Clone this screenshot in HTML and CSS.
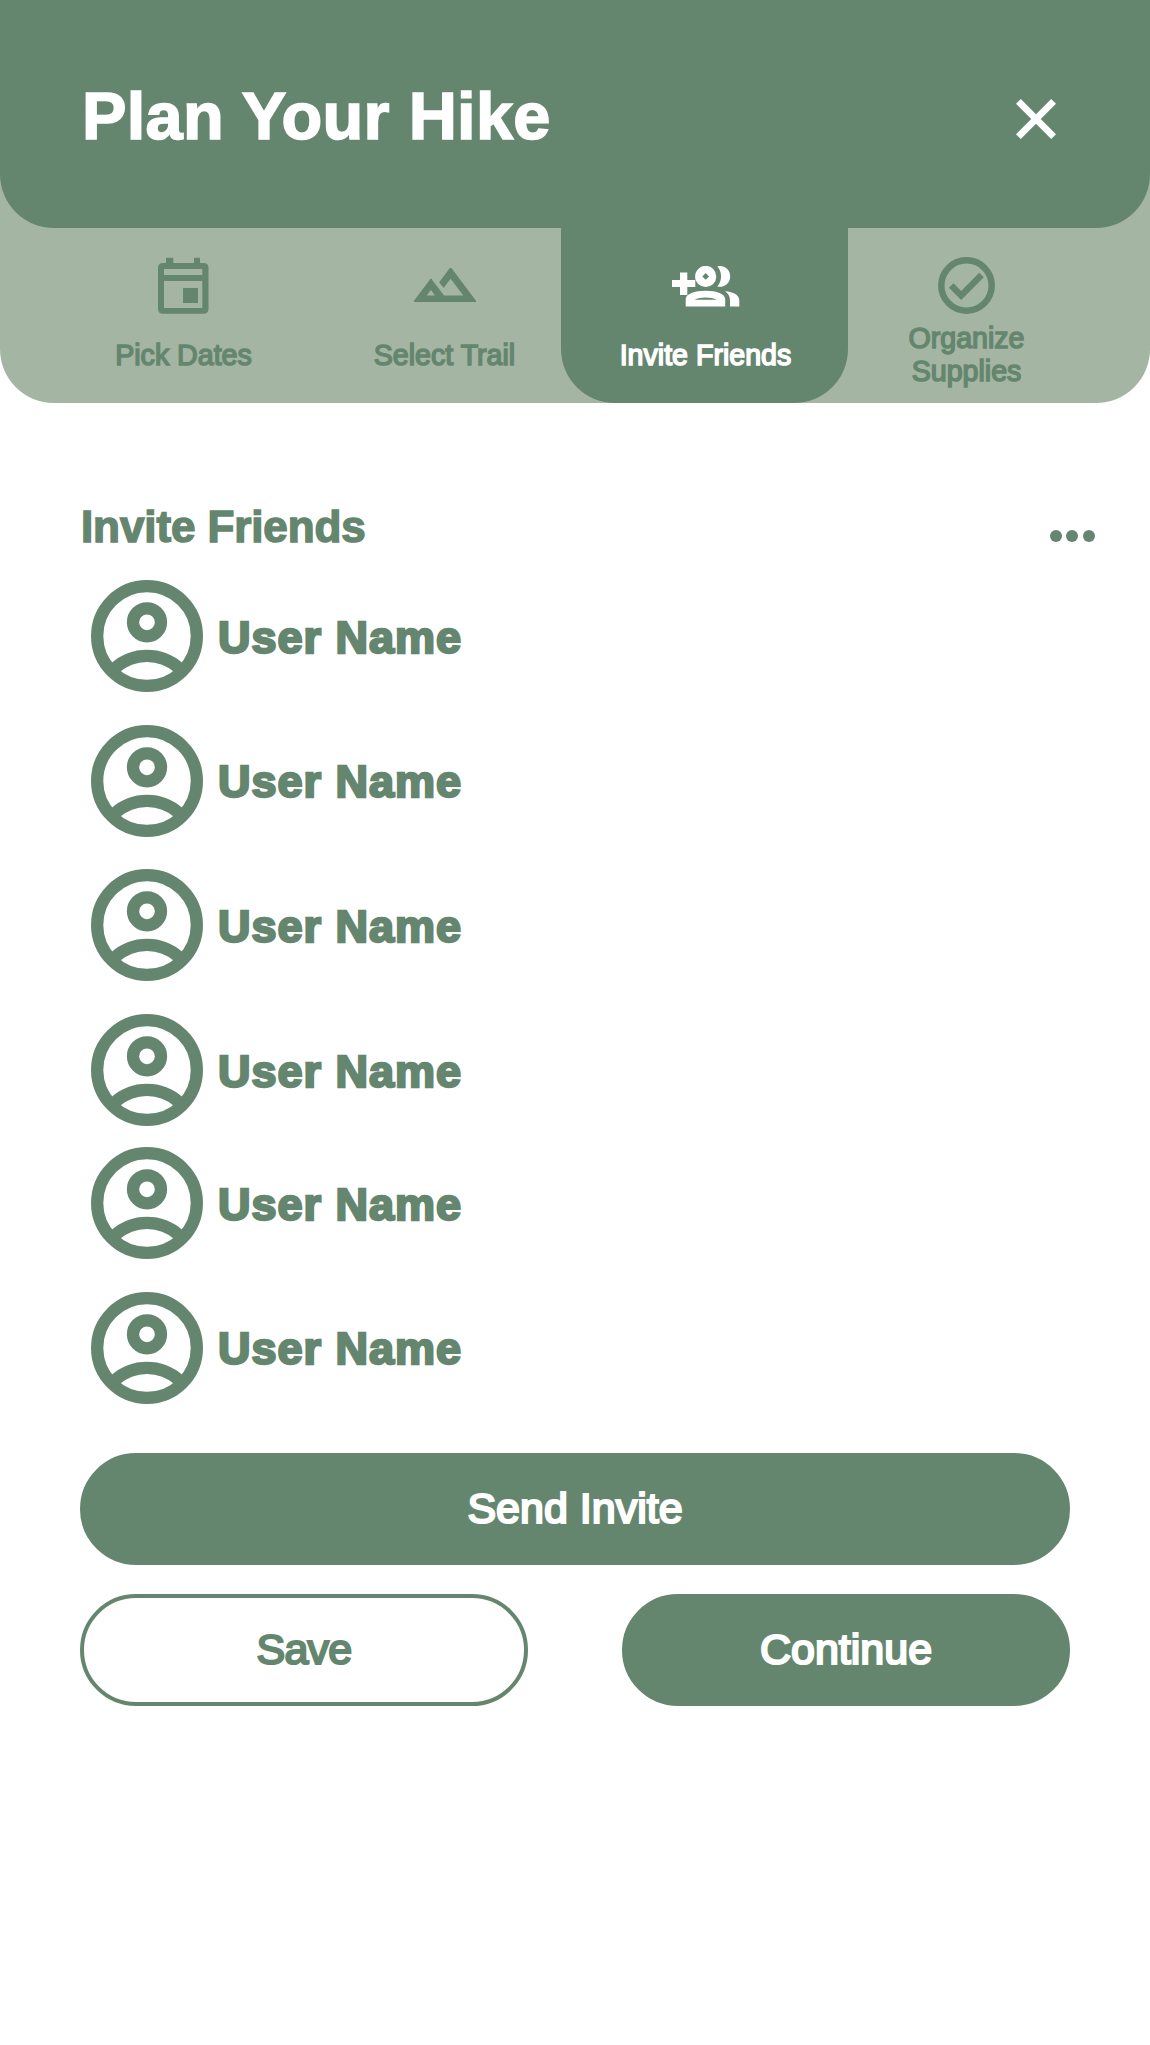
FILE: index.html
```html
<!DOCTYPE html>
<html lang="en">
<head>
  <meta charset="UTF-8">
  <meta name="viewport" content="width=device-width, initial-scale=1.0">
  <title>Plan Your Hike</title>
  <link rel="stylesheet" href="styles.css">
</head>
<body>
  <svg class="defs" width="0" height="0">
    <symbol id="account" viewBox="0 0 112 112">
      <g fill="none" stroke="currentColor" stroke-width="12.300">
        <circle cx="56" cy="56" r="49.850"/>
        <circle cx="56" cy="42.300" r="14"/>
        <path d="M24 88A48 48 0 0 1 88 88"/>
      </g>
    </symbol>
  </svg>

  <header class="header">
    <h1>Plan Your Hike</h1>
    <button class="close" aria-label="Close">
      <svg width="40" height="40" viewBox="0 0 40 40"><path d="M2.400 2.400l35.200 35.200M37.600 2.400L2.400 37.600" stroke="currentColor" stroke-width="6.800"/></svg>
    </button>
  </header>

  <nav class="tabs">
    <a class="tab tab-dates">
      <span class="tab-icon">
        <svg width="51" height="57" viewBox="0 0 51 57" fill="currentColor"><path fill-rule="evenodd" d="M8 .7h7.300V6H36V.7h6V6h3.500q5 0 5 5v40.700q0 5-5 5H5q-5 0-5-5V11q0-5 5-5h3zM6 12v6h38.300v-6zM6 24v27h38.300V24z"/><path d="M25 31h15v15H25z"/></svg>
      </span>
      <span class="tab-label">Pick Dates</span>
    </a>
    <a class="tab tab-trail">
      <span class="tab-icon">
        <svg width="62" height="34" viewBox="40 -720 880 480" fill="currentColor" stroke="currentColor" stroke-width="20"><path d="m40-240 240-320 180 240h300L560-586 460-454l-50-66 150-200 360 480H40Zm160-80h160l-80-107-80 107Z"/></svg>
      </span>
      <span class="tab-label">Select Trail</span>
    </a>
    <a class="tab tab-friends active">
      <span class="tab-icon">
        <svg width="68" height="41" viewBox="0 0 68 41" fill="currentColor">
          <path d="M8 6.500h7.300V14h8v7h-8v8H8v-8H0v-7h8z"/>
          <path fill-rule="evenodd" d="M33.700-.2a10.600 10.600 0 1 1 0 21.200 10.600 10.600 0 0 1 0-21.200zm0 7.200l-3.400 3.400 3.400 3.400 3.400-3.400z"/>
          <path fill-rule="evenodd" d="M13.700 40.500V33c0-5 9-8.200 20-8.200s19.500 3.200 19.500 8.200v7.500zM22.500 33.700h22.200c-6-2.800-16.200-2.800-22.200 0z"/>
          <path d="M45.300.2C53 -1 58.200 4 58.200 10.400S53 21.800 45.300 20.600c5-6 5-14.400 0-20.400z"/>
          <path d="M53 25.300c8.500.5 14.300 4 14.300 9v6.200H58v-6.500c0-3.500-2-6.500-5-8.700z"/>
        </svg>
      </span>
      <span class="tab-label">Invite Friends</span>
    </a>
    <a class="tab tab-supplies">
      <span class="tab-icon">
        <svg width="57" height="57" viewBox="0 0 57 57" fill="none" stroke="currentColor" stroke-width="6.500"><circle cx="28.500" cy="28.500" r="25.200"/><path d="M13.200 28.500L23.200 38.500 43.500 18"/></svg>
      </span>
      <span class="tab-label">Organize<br>Supplies</span>
    </a>
  </nav>

  <main class="content">
    <div class="section-head">
      <h2>Invite Friends</h2>
      <div class="more"><i></i><i></i><i></i></div>
    </div>

    <ul class="friends">
      <li class="friend"><svg class="avatar"><use href="#account"/></svg><span>User Name</span></li>
      <li class="friend"><svg class="avatar"><use href="#account"/></svg><span>User Name</span></li>
      <li class="friend"><svg class="avatar"><use href="#account"/></svg><span>User Name</span></li>
      <li class="friend"><svg class="avatar"><use href="#account"/></svg><span>User Name</span></li>
      <li class="friend"><svg class="avatar"><use href="#account"/></svg><span>User Name</span></li>
      <li class="friend"><svg class="avatar"><use href="#account"/></svg><span>User Name</span></li>
    </ul>

    <div class="actions">
      <button class="btn btn-wide">Send Invite</button>
      <button class="btn btn-outline">Save</button>
      <button class="btn">Continue</button>
    </div>
  </main>
</body>
</html>
```
FILE: styles.css
```css
* {
  box-sizing: border-box;
}

body {
  margin: 0;
  background: #fff;
  color: #65866e;
  font-family: "Liberation Sans", Arial, Helvetica, sans-serif;
}

h1, h2, ul {
  margin: 0;
  padding: 0;
}

button {
  font-family: inherit;
}

.defs {
  display: block;
}

/* header */
.header {
  position: relative;
  z-index: 1;
  display: flex;
  justify-content: space-between;
  align-items: flex-start;
  height: 228px;
  padding: 76px 94px 0 82px;
  background: #65866e;
  color: #fff;
  border-radius: 0 0 54px 54px;
}

.header h1 {
  font-size: 66.7px;
  line-height: 80px;
  letter-spacing: 0.3px;
  -webkit-text-stroke: 1.6px currentColor;
}

.close {
  display: flex;
  margin-top: 23px;
  padding: 0;
  border: 0;
  background: none;
  color: #fff;
}

/* tabs */
.tabs {
  display: flex;
  height: 235px;
  margin-top: -60px;
  padding: 60px 0 0 39px;
  background: #a4b5a4;
  border-radius: 0 0 54px 54px;
}

.tab {
  display: flex;
  flex-direction: column;
  align-items: center;
  padding-top: 28px;
}

.tab-dates { width: 289px; }
.tab-trail { width: 233px; }
.tab-friends { width: 287px; }
.tab-supplies { width: 237px; }

.tab.active {
  background: #65866e;
  color: #fff;
  border-radius: 0 0 54px 54px;
}

.tab-icon {
  display: flex;
  align-items: center;
  height: 58px;
}

.tab.active .tab-icon {
  padding: 2px 0 0 2px;
}

.tab.active .tab-label {
  padding-left: 2px;
}

.tab-label {
  display: flex;
  align-items: center;
  height: 66px;
  margin-top: 8px;
  font-size: 28.6px;
  line-height: 33px;
  text-align: center;
  -webkit-text-stroke: 1.5px currentColor;
}

/* friends list */
.content {
  padding: 99px 80px 0;
}

.section-head {
  display: flex;
  justify-content: space-between;
  margin-right: -25px;
}

.section-head h2 {
  padding-left: 1px;
  font-size: 44px;
  line-height: 50px;
  letter-spacing: -0.1px;
  -webkit-text-stroke: 1.5px currentColor;
}

.more {
  display: flex;
  gap: 4.4px;
  padding-top: 28px;
}

.more i {
  width: 12.2px;
  height: 12.2px;
  border-radius: 50%;
  background: #65866e;
}

.friends {
  display: flex;
  flex-direction: column;
  gap: 32.7px;
  margin-top: 28px;
  padding-left: 11px;
  list-style: none;
}

.friend {
  display: flex;
  align-items: center;
  gap: 15px;
  height: 112px;
  font-size: 45px;
  font-weight: bold;
  letter-spacing: 1px;
  -webkit-text-stroke: 2.4px currentColor;
}

.friend:nth-child(5) {
  margin-top: -11.5px;
}

.friend span {
  padding-top: 3px;
}

.avatar {
  width: 112px;
  height: 112px;
}

/* buttons */
.actions {
  display: grid;
  grid-template-columns: 1fr 1fr;
  gap: 29px 94px;
  margin-top: 49px;
}

.btn {
  height: 112px;
  padding: 0 0 1px;
  border: 4px solid #65866e;
  border-radius: 57px;
  background: #65866e;
  color: #fff;
  font-size: 43px;
  -webkit-text-stroke: 2.2px currentColor;
}

.btn-wide {
  grid-column: 1 / 3;
}

.btn-outline {
  background: #fff;
  color: #65866e;
  letter-spacing: -0.8px;
}
```
